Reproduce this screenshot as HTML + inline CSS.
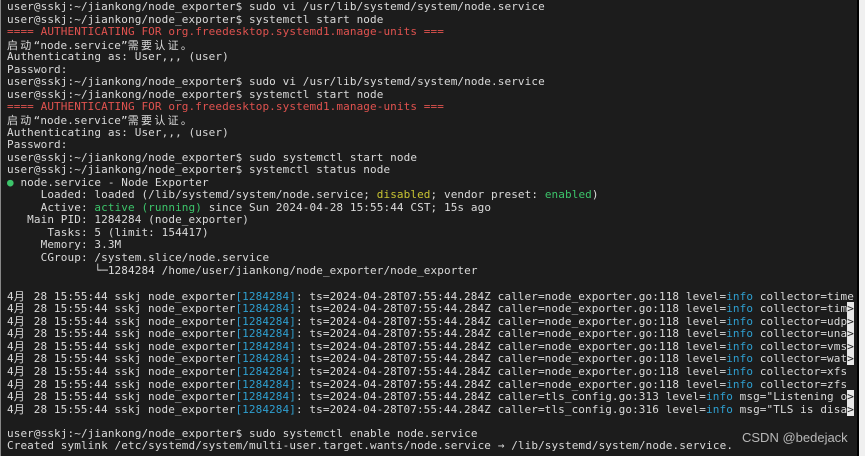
<!DOCTYPE html>
<html><head><meta charset="utf-8"><style>
html,body{margin:0;padding:0;width:865px;height:456px;overflow:hidden;background:#f0f0f0}
#t{position:absolute;left:0;top:0;width:857px;height:456px;background:#1c1c1c;overflow:hidden;border-right:2px solid #000}
#l{position:absolute;left:0;top:0;width:1px;height:456px;background:#888}
.r{position:absolute;left:7px;height:12.55px;line-height:12.55px;white-space:pre;font-family:"DejaVu Sans Mono","Noto Sans CJK SC",monospace;font-size:11px;letter-spacing:0.1px;color:#dadada}
.red{color:#e0524f}.cy{color:#2e9fd0}.gr{color:#3cc46a}.ye{color:#c8c432}
.w{display:inline-block;width:13.3px;font-family:"Noto Sans CJK SC",sans-serif}
.g{background:#e8e8e8;color:#222}
#wm{position:absolute;left:742px;top:430px;font-family:"Liberation Sans",sans-serif;font-size:13px;color:#b8b8b8}
</style></head><body>
<div id="t">
<div class="r" style="top:1px">user@sskj:~/jiankong/node_exporter$ sudo vi /usr/lib/systemd/system/node.service</div>
<div class="r" style="top:13.55px">user@sskj:~/jiankong/node_exporter$ systemctl start node</div>
<div class="r red" style="top:26.1px">==== AUTHENTICATING FOR org.freedesktop.systemd1.manage-units ===</div>
<div class="r" style="top:38.65px"><span class="w">启</span><span class="w">动</span>“node.service”<span class="w">需</span><span class="w">要</span><span class="w">认</span><span class="w">证</span>。</div>
<div class="r" style="top:51.2px">Authenticating as: User,,, (user)</div>
<div class="r" style="top:63.75px">Password:</div>
<div class="r" style="top:76.3px">user@sskj:~/jiankong/node_exporter$ sudo vi /usr/lib/systemd/system/node.service</div>
<div class="r" style="top:88.85px">user@sskj:~/jiankong/node_exporter$ systemctl start node</div>
<div class="r red" style="top:101.4px">==== AUTHENTICATING FOR org.freedesktop.systemd1.manage-units ===</div>
<div class="r" style="top:113.95px"><span class="w">启</span><span class="w">动</span>“node.service”<span class="w">需</span><span class="w">要</span><span class="w">认</span><span class="w">证</span>。</div>
<div class="r" style="top:126.5px">Authenticating as: User,,, (user)</div>
<div class="r" style="top:139.05px">Password:</div>
<div class="r" style="top:151.6px">user@sskj:~/jiankong/node_exporter$ sudo systemctl start node</div>
<div class="r" style="top:164.15px">user@sskj:~/jiankong/node_exporter$ systemctl status node</div>
<div class="r" style="top:176.7px"><span class="gr">●</span> node.service - Node Exporter</div>
<div class="r" style="top:189.25px">     Loaded: loaded (/lib/systemd/system/node.service; <span class="ye">disabled</span>; vendor preset: <span class="gr">enabled</span>)</div>
<div class="r" style="top:201.8px">     Active: <span class="gr">active (running)</span> since Sun 2024-04-28 15:55:44 CST; 15s ago</div>
<div class="r" style="top:214.35px">   Main PID: 1284284 (node_exporter)</div>
<div class="r" style="top:226.9px">      Tasks: 5 (limit: 154417)</div>
<div class="r" style="top:239.45px">     Memory: 3.3M</div>
<div class="r" style="top:252px">     CGroup: /system.slice/node.service</div>
<div class="r" style="top:264.55px">             └─1284284 /home/user/jiankong/node_exporter/node_exporter</div>
<div class="r" style="top:289.65px">4<span class="w">月</span> 28 15:55:44 sskj node_exporter<span class="cy">[1284284]</span>: ts=2024-04-28T07:55:44.284Z caller=node_exporter.go:118 level=<span class="cy">info</span> collector=time</div>
<div class="r" style="top:302.2px">4<span class="w">月</span> 28 15:55:44 sskj node_exporter<span class="cy">[1284284]</span>: ts=2024-04-28T07:55:44.284Z caller=node_exporter.go:118 level=<span class="cy">info</span> collector=tim<span class="g">&gt;</span></div>
<div class="r" style="top:314.75px">4<span class="w">月</span> 28 15:55:44 sskj node_exporter<span class="cy">[1284284]</span>: ts=2024-04-28T07:55:44.284Z caller=node_exporter.go:118 level=<span class="cy">info</span> collector=udp<span class="g">&gt;</span></div>
<div class="r" style="top:327.3px">4<span class="w">月</span> 28 15:55:44 sskj node_exporter<span class="cy">[1284284]</span>: ts=2024-04-28T07:55:44.284Z caller=node_exporter.go:118 level=<span class="cy">info</span> collector=una<span class="g">&gt;</span></div>
<div class="r" style="top:339.85px">4<span class="w">月</span> 28 15:55:44 sskj node_exporter<span class="cy">[1284284]</span>: ts=2024-04-28T07:55:44.284Z caller=node_exporter.go:118 level=<span class="cy">info</span> collector=vms<span class="g">&gt;</span></div>
<div class="r" style="top:352.4px">4<span class="w">月</span> 28 15:55:44 sskj node_exporter<span class="cy">[1284284]</span>: ts=2024-04-28T07:55:44.284Z caller=node_exporter.go:118 level=<span class="cy">info</span> collector=wat<span class="g">&gt;</span></div>
<div class="r" style="top:364.95px">4<span class="w">月</span> 28 15:55:44 sskj node_exporter<span class="cy">[1284284]</span>: ts=2024-04-28T07:55:44.284Z caller=node_exporter.go:118 level=<span class="cy">info</span> collector=xfs</div>
<div class="r" style="top:377.5px">4<span class="w">月</span> 28 15:55:44 sskj node_exporter<span class="cy">[1284284]</span>: ts=2024-04-28T07:55:44.284Z caller=node_exporter.go:118 level=<span class="cy">info</span> collector=zfs</div>
<div class="r" style="top:390.05px">4<span class="w">月</span> 28 15:55:44 sskj node_exporter<span class="cy">[1284284]</span>: ts=2024-04-28T07:55:44.284Z caller=tls_config.go:313 level=<span class="cy">info</span> msg="Listening o<span class="g">&gt;</span></div>
<div class="r" style="top:402.6px">4<span class="w">月</span> 28 15:55:44 sskj node_exporter<span class="cy">[1284284]</span>: ts=2024-04-28T07:55:44.284Z caller=tls_config.go:316 level=<span class="cy">info</span> msg="TLS is disa<span class="g">&gt;</span></div>
<div class="r" style="top:427.7px">user@sskj:~/jiankong/node_exporter$ sudo systemctl enable node.service</div>
<div class="r" style="top:440.25px">Created symlink /etc/systemd/system/multi-user.target.wants/node.service → /lib/systemd/system/node.service.</div>
<div id="wm">CSDN @bedejack</div>
</div>
<div id="l"></div>
</body></html>
